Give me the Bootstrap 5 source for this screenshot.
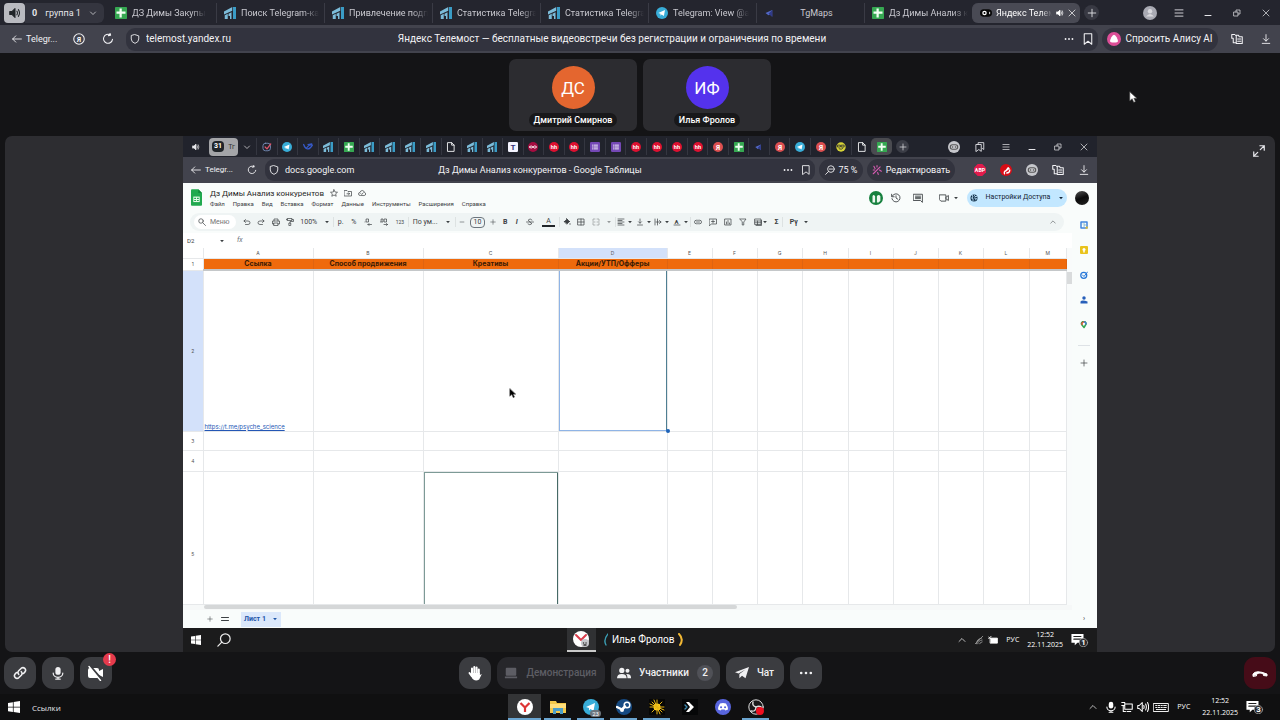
<!DOCTYPE html>
<html lang="ru">
<head>
<meta charset="utf-8">
<meta name="viewport" content="width=device-width, initial-scale=1">
<title>Яндекс Телемост</title>
<link rel="stylesheet" href="https://cdn.jsdelivr.net/npm/bootstrap@5.3.0/dist/css/bootstrap.min.css">
<style>
body{background:#141416;color:#e6e6ea;font:10px/14px Roboto,"Noto Sans",sans-serif;overflow-x:hidden}
svg{width:12px;height:12px;flex:none;display:block;fill:none;stroke:currentColor;stroke-width:1.4;stroke-linecap:round;stroke-linejoin:round}
svg.s6{width:6px;height:6px}svg.s8{width:8px;height:8px}svg.s10{width:10px;height:10px}svg.s14{width:14px;height:14px}svg.s16{width:16px;height:16px}
svg text{fill:#fff;stroke:none;font:bold 9px Roboto,sans-serif;text-anchor:middle}
.plain{border:0;background:none;padding:0;color:inherit;font:inherit;display:inline-flex;align-items:center;justify-content:center;white-space:nowrap;flex:none}
.plain:hover{color:inherit}
input.bare{border:0;background:none;padding:0;color:inherit;font:inherit;min-width:0;outline:0}
.slot{width:29px}
.gap6{gap:6px}
.clip{overflow:hidden;white-space:nowrap}
/* outer browser */
.tabs{background:#24252e;height:25px;font-size:9px}
.tab-item{flex:0 1 108px;min-width:0;padding:0 4px 0 7px;height:20px;gap:5px;color:#c9c9d0;text-decoration:none}
.tab-item+.tab-item{border-left:1px solid #3a3b45}
.tab-item.active{background:#494a54;border-color:#494a54;border-radius:6px;color:#fff;gap:4px}
.fade-end{-webkit-mask-image:linear-gradient(90deg,#000 80%,transparent);mask-image:linear-gradient(90deg,#000 80%,transparent)}
.addr{background:#42434d;height:28px;color:#f2f2f5}
.field{background:#32333e;border-radius:9px;height:23px;display:grid;grid-template-columns:1fr auto 1fr;align-items:center}
.pill{background:#32333e;border-radius:12px;height:23px}
/* meeting */
.people{height:83px;padding-top:6px}
.tile{width:128px;height:72px;background:#2c2c30;border-radius:7px;padding-top:7px}
.face{width:43px;height:43px;font-size:17px;color:#fff}
.name{background:#18181a;border-radius:7px;font-size:9px;font-weight:500;height:14px;padding:0 5px;color:#fff}
.stage{background:#2d2d31;border-radius:7px;padding:0 178px;margin:0 5px}
.ctl{height:32px;min-width:32px;border-radius:11px;background:#3b3c40;color:#f0f0f2;font-weight:500}
.ctl:disabled{background:#27272b;color:#5d5d64}
.three{display:grid;grid-template-columns:1fr auto 1fr;align-items:center}
/* shared screen */
.in-tabs{background:#21232c;height:21px}
.in-tabs .strip{width:636px}
.in-tabs .strip>*{flex:1;height:17px;border-left:1px solid #343640}
.in-tabs .strip>.active{background:#4a4b50;border-radius:5px;border-color:#4a4b50}
.in-tabs .slot,.in-addr .slot{width:26px}
.in-addr{background:#42434d;height:26px;font-size:9px;color:#f2f2f5}
.in-addr .field,.in-addr .pill{height:22px}
.docs{background:#f9fcfb;color:#3c4043;font-size:7px;line-height:9px}
.doc-head{height:29px}
.doc-title{font-size:8px;line-height:11px;color:#1f1f1f}
.doc-menu{font-size:6px}
.share{background:#c2e7ff;border-radius:10px;height:18px;color:#123}
.tools{background:#eff4f4;border-radius:9px;height:18px;margin:1px 8px 2px 7px;padding-left:4px}
.tools>div{display:flex;align-items:center;justify-content:space-around;flex:none}
.tools>.cut{border-left:1px solid #dde2e2;height:10px}
.sheet{table-layout:fixed;width:100%;border-collapse:collapse;background:#fff;color:#222;line-height:8px;font-size:7px;font-family:Inter,"Noto Sans",sans-serif}
.sheet th,.sheet td{border-right:1px solid #e6e8ea;border-bottom:1px solid #e6e8ea;padding:0 1px;overflow:hidden;white-space:nowrap}
.sheet thead th{font-size:5px;font-weight:400;text-align:center;height:10px;color:#555}
.sheet tbody th{font-size:5px;font-weight:400;text-align:center;vertical-align:middle;color:#555}
.sheet .caps td{background:#ef6a0c;border-color:#df6410;text-align:center;vertical-align:middle;font-weight:700;color:#3a1a04;height:12px;border-bottom:2px solid #c4c7c9}
.sheet .pick{background:#d3e1fa}
.sheet td.chosen{position:relative;overflow:visible;box-shadow:inset 1px 0 #8fb4e6,inset 0 -1px #8fb4e6,inset -1px 0 #4f7f92}
.chosen::after{content:"";position:absolute;right:-3px;bottom:-2px;width:4px;height:4px;border-radius:50%;background:#1d62b8}
.sheet td.peer{box-shadow:inset 1px 0 #7d9a96,inset 0 1px #7d9a96,inset -1px 0 #466a66}
.sheet tr.last th{padding-top:32px}
.sheet a{font-size:6px;color:#2457b5}
.h-bar{height:5px;background:#f6f8f8}
.h-bar span{display:block;width:60%;height:4px;margin-left:21px;background:#d5d7d8;border-radius:2px}
.gutter{width:5px;flex:none;background:#f9fbfb;padding-top:24px}
.gutter span{display:block;height:12px;background:#d9dbdc}
.side{width:25px;flex:none}
.side .plain{height:25px}
.doc-tab{background:#dbe8fb;color:#1d55a8;font-weight:700;width:40px;height:15px}
.in-task{background:#1b1b1c;height:24px;display:grid;grid-template-columns:42% auto 1fr;align-items:center;color:#eee}
.tiny{font:7px/12px "Open Sans","Noto Sans",sans-serif;text-align:center;color:#fff}
.tiny .two{line-height:10px}
.task{background:#101011;height:26px}
.task .app{width:33px;height:26px}
.task .on{background:linear-gradient(#6ba5d0,#6ba5d0) center bottom/27px 2px no-repeat}
.task .cur{background:linear-gradient(#6ba5d0,#6ba5d0) center bottom/100% 2px no-repeat #333436}
.links{font:8px "Open Sans","Noto Sans",sans-serif}
.in-app{width:29px;height:24px;background:#303133;border-bottom:2px solid #c9c9c9}
.over{position:absolute;pointer-events:none}
.alert-dot{top:-4px;right:-4px;width:13px;height:13px;background:#e53a4c;color:#fff;font-size:10px;line-height:13px;text-align:center;border-radius:50%}
.count{background:#505157;border-radius:8px;width:16px;height:16px;line-height:16px;text-align:center}
.note-svg{width:18px;height:14px}
</style>
</head>
<body class="d-flex flex-column min-vh-100 position-relative">
<svg class="d-none" aria-hidden="true">
<symbol id="spk" viewBox="0 0 16 16"><path d="M1 6h3l4-4v12l-4-4H1z" fill="currentColor"/><path d="M10.500 5.500q1.500 2.500 0 5M12.500 3.500q3 4.500 0 9"/></symbol>
<symbol id="chev" viewBox="0 0 16 16"><path d="M3 6l5 5 5-5"/></symbol>
<symbol id="up" viewBox="0 0 16 16"><path d="M2 11l6-6 6 6"/></symbol>
<symbol id="caret" viewBox="0 0 16 16"><path d="M3 5h10l-5 6z" fill="currentColor" stroke="none"/></symbol>
<symbol id="gs" viewBox="0 0 16 16" stroke="none"><rect width="16" height="16" rx="1" fill="#36a852"/><path d="M6 2h3v4h5v3H9v5H6V9H2V6h4z" fill="#f2fff4"/></symbol>
<symbol id="st" viewBox="0 0 16 16" stroke="none"><path d="M0 6L11 0v5L0 10zM1 11l4-2v7H1zM6 9l4-2v9H8v-4H6z" fill="#7cbcd9"/><path d="M12 0h4v16h-4z" fill="#3a9cc6"/></symbol>
<symbol id="tg" viewBox="0 0 16 16" stroke="none"><circle cx="8" cy="8" r="8" fill="#38add8"/><path d="M3 8l9-4-1.500 8-3-2-1.500 1.500V9z" fill="#fff"/></symbol>
<symbol id="tm" viewBox="0 0 16 16" stroke="none"><path d="M2 8l9-4v9l-3-3-2 1z" fill="#5369c7"/><path d="M6 9l5-5v9z" fill="#303b88"/></symbol>
<symbol id="eye" viewBox="0 0 16 16" stroke="none"><rect y="3" width="16" height="10" rx="5" fill="#080808"/><circle cx="6" cy="8" r="3" fill="#fff"/><circle cx="6" cy="8" r="1.300" fill="#000"/><path d="M12 6l2 2-2 2z" fill="#ddd"/></symbol>
<symbol id="x" viewBox="0 0 16 16"><path d="M2 2l12 12M14 2L2 14"/></symbol>
<symbol id="plus" viewBox="0 0 16 16"><path d="M8 2v12M2 8h12"/></symbol>
<symbol id="minus" viewBox="0 0 16 16"><path d="M3 8h10"/></symbol>
<symbol id="ham" viewBox="0 0 16 16"><path d="M1 3h14M1 8h14M1 13h14" stroke-linecap="butt"/></symbol>
<symbol id="two" viewBox="0 0 16 16"><path d="M1 5h14M1 11h14" stroke-width="2"/></symbol>
<symbol id="min" viewBox="0 0 16 16"><path d="M2 13h12" stroke-width="2"/></symbol>
<symbol id="rest" viewBox="0 0 16 16"><path d="M2 6h8v8H2zM6 6V2h8v8h-4"/></symbol>
<symbol id="back" viewBox="0 0 16 16"><path d="M15 8H1M6 3L1 8l5 5"/></symbol>
<symbol id="reload" viewBox="0 0 16 16"><path d="M14 8.500a6 6 0 1 1-3-6M10.500 0l1 3-3 .5"/></symbol>
<symbol id="shield" viewBox="0 0 16 16"><path d="M8 1l6 2v5q0 5-6 7-6-2-6-7V3z"/></symbol>
<symbol id="ya" viewBox="0 0 16 16"><circle cx="8" cy="8" r="7"/><text x="8" y="11.500">Я</text></symbol>
<symbol id="yar" viewBox="0 0 16 16"><circle cx="8" cy="8" r="8" fill="#dc4f50" stroke="none"/><text x="8" y="12" style="font-size:11px">Я</text></symbol>
<symbol id="dots" viewBox="0 0 16 16" stroke="none" fill="currentColor"><circle cx="2.500" cy="8" r="1.500"/><circle cx="8" cy="8" r="1.500"/><circle cx="13.500" cy="8" r="1.500"/></symbol>
<symbol id="mark-i" viewBox="0 0 16 16"><path d="M3 1h10v14l-5-4-5 4z"/></symbol>
<symbol id="alice" viewBox="0 0 16 16" stroke="none"><circle cx="8" cy="8" r="8" fill="#dd4f98"/><path d="M8 3q1.500 0 3 3t1.500 4.500Q12.500 12 8 12t-4.500-1.500Q3.500 9 5 6t3-3z" fill="#fff"/></symbol>
<symbol id="panel" viewBox="0 0 16 16"><path d="M5 2H1v5h2v6h3M6 3h4l1 2h4v9H7V3M9 8h4M9 11h4"/></symbol>
<symbol id="down" viewBox="0 0 16 16"><path d="M8 1v10M4 7.500l4 4 4-4M2 15h12"/></symbol>
<symbol id="user" viewBox="0 0 16 16" stroke="none"><circle cx="8" cy="8" r="8" fill="#a9aab3"/><circle cx="8" cy="6" r="2.500" fill="#d9d9dd"/><path d="M3.500 12q4.500-6 9 0z" fill="#d9d9dd"/></symbol>
<symbol id="chk" viewBox="0 0 16 16"><rect x="1.500" y="2" width="12" height="12" rx="4" stroke="#7891bd"/><path d="M5 8l3 3 6-8" stroke="#e2566d" stroke-width="2"/></symbol>
<symbol id="wv" viewBox="0 0 16 16"><path d="M1 4q3 9 6 4t8-3q-4 7-8 6T1 4zM8 4l6-1" stroke="#3659c8" stroke-width="2"/></symbol>
<symbol id="doc" viewBox="0 0 16 16"><path d="M3 1h6l4 4v10H3zM9 1v4h4"/></symbol>
<symbol id="tt" viewBox="0 0 16 16"><rect width="16" height="16" rx="2" fill="#f4f4ff" stroke="none"/><text x="8" y="12.500" style="font-size:13px;fill:#333078">T</text></symbol>
<symbol id="oo" viewBox="0 0 16 16"><circle cx="8" cy="8" r="8" fill="#a50c40" stroke="none"/><path d="M2 8q3-4 6 0t6 0q-3-4-6 0T2 8" stroke="#fff"/></symbol>
<symbol id="hh" viewBox="0 0 16 16"><circle cx="8" cy="8" r="8" fill="#dd1030" stroke="none"/><text x="8" y="11">hh</text></symbol>
<symbol id="fm" viewBox="0 0 16 16"><rect width="16" height="16" rx="2" fill="#7448b5" stroke="none"/><path d="M4 5h1M7 5h5M4 8h1M7 8h5M4 11h1M7 11h5" stroke="#fff"/></symbol>
<symbol id="sm" viewBox="0 0 16 16"><circle cx="8" cy="8" r="7.500" fill="#d8d436" stroke="none"/><path d="M3 5h4v3H3zM9 5h4v3H9zM5 11q4 2 6-1" stroke="#333"/></symbol>
<symbol id="rob" viewBox="0 0 16 16"><circle cx="8" cy="8" r="8" fill="#c6c7cc" stroke="none"/><rect x="3" y="5" width="10" height="6" rx="3" stroke="#555"/><path d="M6 8h.1M10 8h.1" stroke="#555" stroke-width="2"/></symbol>
<symbol id="bm2" viewBox="0 0 16 16"><path d="M5 4V1h9v11l-2-1.500M2 4h8v11l-4-3-4 3z"/></symbol>
<symbol id="zoom" viewBox="0 0 16 16"><circle cx="9.500" cy="6.500" r="5.300"/><path d="M5.500 10.500L1 15M7 6.500h5"/></symbol>
<symbol id="wand" viewBox="0 0 16 16" stroke="#d35bb0"><path d="M2 14L13 3M3 2l2 4M8 1v2M12 8l3 2M9 12l1 3M2 8h2" stroke-width="1.800"/></symbol>
<symbol id="abp" viewBox="0 0 16 16"><path d="M5 0h6l5 5v6l-5 5H5l-5-5V5z" fill="#e21b4c" stroke="none"/><text x="8" y="10.500" style="font-size:7px">ABP</text></symbol>
<symbol id="red" viewBox="0 0 16 16"><circle cx="8" cy="8" r="8" fill="#d80d16" stroke="none"/><path d="M6 13q-1-3 2-4l4-3M8 9l3-4M9 12q4 0 4-4" stroke="#fff" stroke-width="1.800"/></symbol>
<symbol id="glogo" viewBox="0 0 12 18" stroke="none"><path d="M1 0h7l4 4v13q0 1-1 1H1q-1 0-1-1V1q0-1 1-1z" fill="#21a94f"/><path d="M8 0l4 4H8z" fill="#128a3b"/><path d="M2.500 8h7v6h-7z" fill="#e6fbea"/><path d="M3.500 9.200h2v1.300h-2zM6.500 9.200h2v1.300h-2zM3.500 11.600h2v1.300h-2zM6.500 11.600h2v1.300h-2z" fill="#21a94f"/></symbol>
<symbol id="star" viewBox="0 0 16 16"><path d="M8 1.500l2 4.500 5 .5-3.700 3.200 1.100 4.800L8 12l-4.400 2.500 1.100-4.800L1 6.500 6 6z"/></symbol>
<symbol id="fold" viewBox="0 0 16 16"><path d="M1 3h5l2 2h7v9H1zM6 9.500h5M9 7.500l2 2-2 2"/></symbol>
<symbol id="cloud" viewBox="0 0 16 16"><path d="M4 13q-3 0-3-3t3-3q1-4 4.500-4T13 7q2.500.5 2.500 3T13 13zM5.500 9l2 2 3-3.500"/></symbol>
<symbol id="hist" viewBox="0 0 16 16"><path d="M2 5a6.500 6.500 0 1 1-.5 4M1 2v4h4M8 4.500V8l3 2"/></symbol>
<symbol id="cmt" viewBox="0 0 16 16"><path d="M1 2h14v13l-3-3H1zM4 5h8M4 7h8M4 9h8"/></symbol>
<symbol id="vid" viewBox="0 0 16 16"><path d="M1 3h10v10H3l-2-2zM11 7l4-3v8l-4-3"/></symbol>
<symbol id="globe" viewBox="0 0 16 16"><circle cx="8" cy="8" r="7" fill="#12314a" stroke="none"/><path d="M5 3l1 3-3 2 3 1v4M9 3l1 2h3M9 8l4 1-2 3" stroke="#c2e7ff" stroke-width="1.800"/></symbol>
<symbol id="mag" viewBox="0 0 16 16"><circle cx="6" cy="6" r="4.500"/><path d="M9.500 9.500L15 15"/></symbol>
<symbol id="magl" viewBox="0 0 16 16"><circle cx="9.500" cy="6.500" r="5.500"/><path d="M5.500 10.500L1 15"/></symbol>
<symbol id="undo" viewBox="0 0 16 16"><path d="M5 3L2 6l3 3M2 6h8q4 0 4 3.500T10 13H5"/></symbol>
<symbol id="redo" viewBox="0 0 16 16"><path d="M11 3l3 3-3 3M14 6H6Q2 6 2 9.500T6 13h5"/></symbol>
<symbol id="print" viewBox="0 0 16 16"><path d="M4 6V2h8v4M4 12H1V6h14v6h-3M4 10h8v5H4z"/></symbol>
<symbol id="paint" viewBox="0 0 16 16"><path d="M3 1h9v4H3zM12 3h3v4H8v3M6.500 10h3v5h-3zM3 3H1"/></symbol>
<symbol id="dec" viewBox="0 0 16 16"><path d="M2 8h.1M5 2h4v6H5zM8 13h7M10 11l-2 2 2 2"/></symbol>
<symbol id="inc" viewBox="0 0 16 16"><path d="M3 2h3v6H3zM9 2h4v6H9zM1 8h.1M8 13h7M13 11l2 2-2 2"/></symbol>
<symbol id="strk" viewBox="0 0 16 16"><path d="M1 8h14M12 4Q8 0 5 3.500 4 6 8 8t3 4Q8 15 4 12"/></symbol>
<symbol id="fill" viewBox="0 0 16 16"><path d="M3 7l5-5 5 5-5 5zM6 0l3 3M3 7h10z" fill="currentColor"/><path d="M14 11v2"/></symbol>
<symbol id="bord" viewBox="0 0 16 16"><path d="M2 2h12v12H2zM8 2v12M2 8h12"/></symbol>
<symbol id="merge" viewBox="0 0 16 16"><path d="M2 6V2h4M10 2h4v4M2 10v4h4M10 14h4v-4M2 8h4M10 8h4"/></symbol>
<symbol id="al" viewBox="0 0 16 16"><path d="M2 2h12M2 5h8M2 8h12M2 11h8M2 14h12"/></symbol>
<symbol id="va" viewBox="0 0 16 16"><path d="M8 2v8M5 7.500l3 3 3-3M3 14h10"/></symbol>
<symbol id="wr" viewBox="0 0 16 16"><path d="M2 2v12M7 2v12M4 8h10M11 5l3 3-3 3"/></symbol>
<symbol id="rotA" viewBox="0 0 16 16"><text x="7" y="11" style="fill:currentColor;font-size:12px">A</text><path d="M2 14h12"/></symbol>
<symbol id="lnk" viewBox="0 0 16 16"><path d="M7 4.500H4.500a3.500 3.500 0 0 0 0 7H7M9 4.500h2.500a3.500 3.500 0 0 1 0 7H9M5 8h6"/></symbol>
<symbol id="addc" viewBox="0 0 16 16"><path d="M1 2h14v10H5l-4 3zM8 4v6M5 7h6"/></symbol>
<symbol id="chart" viewBox="0 0 16 16"><path d="M2 2h12v12H2zM5 12V8M8 12V5M11 12v-2"/></symbol>
<symbol id="filt" viewBox="0 0 16 16"><path d="M2 2h12L9.500 8v6h-3V8z"/></symbol>
<symbol id="tbl" viewBox="0 0 16 16"><path d="M2 2h12v11H2zM2 6h12M7 6v7M2 9.500h12M4 15h11V5" /></symbol>
<symbol id="cal" viewBox="0 0 16 16"><path d="M2 2h12v12H2z" fill="#fff" stroke="#4285dd" stroke-width="3"/><path d="M6 6h4v4H7" stroke="#61a4b4"/><path d="M14 12v2h-2" stroke="#e4bd2d" stroke-width="3"/></symbol>
<symbol id="keep" viewBox="0 0 16 16" stroke="none"><rect width="16" height="16" rx="2" fill="#e9c31c"/><circle cx="8" cy="7" r="3" fill="#fff"/><path d="M6.500 10h3v3h-3z" fill="#fff"/></symbol>
<symbol id="todo" viewBox="0 0 16 16"><circle cx="7.500" cy="8.500" r="6" stroke="#2878d8" stroke-width="2.500"/><path d="M5 8l3 3 7-9" stroke="#2878d8" stroke-width="2"/></symbol>
<symbol id="pers" viewBox="0 0 16 16" stroke="none" fill="#275fba"><circle cx="8" cy="4" r="3.500"/><path d="M1 15V11q3-4 14 0v4z"/></symbol>
<symbol id="map" viewBox="0 0 16 16"><path d="M4 8a4.500 4.500 0 1 1 7 0L8 13z" stroke="#34a853" stroke-width="3"/><path d="M4 7V4l3-2" stroke="#e25137" stroke-width="3"/><path d="M9 2q3 1 3 4" stroke="#477dd5" stroke-width="3"/></symbol>
<symbol id="win" viewBox="0 0 16 16" stroke="none"><path d="M0 2.500L6.500 1.500V7.500H0zM7.500 1.300L16 0v7.500H7.500zM0 8.500h6.500v6L0 13.500zM7.500 8.500H16V16l-8.500-1.300z" fill="#fff"/></symbol>
<symbol id="yb" viewBox="0 0 16 16"><circle cx="8" cy="8" r="8" fill="#fff" stroke="none"/><path d="M3.500 4L8 8.500 12.500 4M8 8.500V13" stroke="#dd3535" stroke-width="2.200" stroke-linecap="butt"/></symbol>
<symbol id="yi" viewBox="0 0 16 16"><circle cx="8" cy="8" r="8" fill="#fff" stroke="none"/><path d="M3 4l5 5 5-5" stroke="#d93d4c" stroke-width="2"/><circle cx="12" cy="12" r="4" fill="#c5c6cb" stroke="none"/><path d="M10.500 12h.1M13 12h.1M11 14h2" stroke="#333"/></symbol>
<symbol id="ex" viewBox="0 0 16 16" stroke="none"><path d="M0 2h6l1 2h9v10H0z" fill="#f2c84b"/><path d="M0 5h16v4H0z" fill="#ffdf7c"/><path d="M3 9h10v6h-3v-3H6v3H3z" fill="#4c9fc9"/></symbol>
<symbol id="steam" viewBox="0 0 16 16"><circle cx="8" cy="8" r="8" fill="#164a82" stroke="none"/><circle cx="11" cy="6" r="2.800" stroke="#fff" stroke-width="1.500"/><path d="M1 8l5 2.500L9 7.500" stroke="#fff" stroke-width="2.500"/><circle cx="6" cy="11" r="2" fill="#fff" stroke="none"/></symbol>
<symbol id="sun" viewBox="0 0 16 16"><rect width="16" height="16" fill="#060606" stroke="none"/><circle cx="8" cy="8" r="3.500" fill="#ffd21c" stroke="none"/><path d="M8 1v14M1 8h14M3 3l10 10M13 3L3 13M5 1l6 14M1 5l14 6" stroke="#e9b716" stroke-width="1"/></symbol>
<symbol id="arr" viewBox="0 0 16 16"><rect width="16" height="16" fill="#060708" stroke="none"/><path d="M4 3h3l5 5-5 5H4l4-5z" fill="#fff" stroke="none"/><path d="M3 6l2 2-2 2" stroke="#3e8ab0"/></symbol>
<symbol id="disc" viewBox="0 0 16 16"><circle cx="8" cy="8" r="8" fill="#5865dd" stroke="none"/><path d="M5 4.500q3-1 6 0 2 3 2 6l-2.500 1-1-1h-3l-1 1-2.500-1q0-3 2-6z" fill="#fff" stroke="none"/><path d="M6 8.300h.1M10 8.300h.1" stroke="#5865dd" stroke-width="2"/></symbol>
<symbol id="obs" viewBox="0 0 16 16"><circle cx="8" cy="8" r="7.200" fill="#19191a" stroke="#ddd" stroke-width="1"/><path d="M8 8q-4-1-3-5M8 8q4-2 6 1M8 8q0 5-5 4" stroke="#ddd"/><circle cx="12" cy="12" r="4" fill="#ef1021" stroke="none"/></symbol>
<symbol id="mic" viewBox="0 0 16 16"><rect x="5" y="1" width="6" height="9" rx="3" fill="currentColor" stroke="none"/><path d="M2.500 8a5.500 5 0 0 0 11 0M8 13v2M5.500 15h5"/></symbol>
<symbol id="chain" viewBox="0 0 16 16" stroke-width="1.800"><path d="M6.500 9.500a3 3 0 0 1 0-4l3-3a3 3 0 0 1 4.200 4.200L12 8.500M9.500 6.500a3 3 0 0 1 0 4l-3 3a3 3 0 0 1-4.200-4.200L4 7.500"/></symbol>
<symbol id="cam" viewBox="0 0 16 16"><path d="M0 5q0-2 2-2h7q2 0 2 2v1l4-2v8l-4-2v1q0 2-2 2H2q-2 0-2-2z" fill="#fff" stroke="none"/><path d="M2 1l12 14" stroke="#3b3c40" stroke-width="2.500"/><path d="M1 1.500l11.500 14" stroke="#fff"/></symbol>
<symbol id="hand" viewBox="0 0 16 16"><path d="M5 9V3.500M7.300 8V2M9.600 8V2.500M11.800 9V4.500M2.500 8L5 11.500" stroke="#fff" stroke-width="2"/><path d="M4 8h8.800v2l2-1-2.600 5.500q-4 2.500-7-1z" fill="#fff" stroke="none"/></symbol>
<symbol id="duo" viewBox="0 0 16 16"><circle cx="8" cy="8" r="8" fill="#16803e" stroke="none"/><path d="M4 13V6q1-3 3 0v7zM9 13V6q2-3 4 0v5l-2 2z" fill="#eef7f0" stroke="none"/></symbol>
<symbol id="lap" viewBox="0 0 16 16" stroke="none" fill="currentColor"><rect x="2" y="2" width="12" height="9" rx="1"/><path d="M1 12h14v2H1z"/></symbol>
<symbol id="ppl" viewBox="0 0 16 16" stroke="none" fill="currentColor"><circle cx="5.500" cy="5" r="3"/><circle cx="12" cy="5.500" r="2.300"/><path d="M0 14q0-5 5.500-5t5.500 5zM12 14q0-3-1.500-4.800Q16 9 16 13v1z"/></symbol>
<symbol id="send" viewBox="0 0 16 16" stroke="none" fill="currentColor"><path d="M0 7L16 1l-4 13-4-3-3 3V9l7-5-8 4.500z"/></symbol>
<symbol id="hang" viewBox="0 0 16 16"><path d="M1 11V9q3-4.500 14-.0V11l-3.500-.5-.5-2q-3-1-6 0l-.5 2z" fill="#fff" stroke="#fff" stroke-width="1"/></symbol>
<symbol id="net" viewBox="0 0 16 16"><path d="M5 4h10v7H5zM8 14h5M1 2h4v4H1M3 6v8h3"/></symbol>
<symbol id="vol" viewBox="0 0 16 16"><path d="M1 6h2l4-4v12l-4-4H1zM9 6q1 2 0 4M11.500 4q2 4 0 8M14 2q3 6 0 12"/></symbol>
<symbol id="kb" viewBox="0 0 24 16"><path d="M1 2h22v12H1zM4 5h2M8 5h2M12 5h2M16 5h4M4 8h2M8 8h2M12 8h2M16 8h4M5 11h14"/></symbol>
<symbol id="note" viewBox="0 0 20 16"><path d="M0 1h14v10H7l-3 3v-3H0z" fill="#fff" stroke="none"/><path d="M3 4h8M3 7h8" stroke="#222"/><circle cx="14" cy="11" r="4.700" fill="#29292b" stroke="#999" stroke-width="1"/></symbol>
<symbol id="wifi" viewBox="0 0 16 16" stroke="#999"><path d="M2 14L14 2M6 14q0-5 7-6M9 14q0-2 4-3M4 14q0-8 8-9"/></symbol>
<symbol id="bat" viewBox="0 0 16 16"><path d="M4 5h11v8H4z" fill="#fff"/><path d="M1 3l3 3M1 6l4-4"/></symbol>
<symbol id="expand" viewBox="0 0 16 16"><path d="M9 2h5v5M14 2L9.500 6.500M7 14H2V9M2 14l4.500-4.500"/></symbol>
<symbol id="ptr" viewBox="0 0 10 16"><path d="M1 1v11l3-2.500L6 14l2-1-2-4h3.500z" fill="var(--f)" stroke="#555" stroke-width=".7"/></symbol>
</svg>

<header>
 <nav class="tabs d-flex align-items-center ps-1" aria-label="Вкладки">
  <button class="plain rounded-1 text-dark" style="background:#b9bac0;width:21px;height:20px" aria-label="Звук"><svg><use href="#spk"/></svg></button>
  <button class="plain rounded-end gap-2" style="background:#34353f;width:79px;height:20px"><b>0</b><span>группа 1</span><svg class="s8"><use href="#chev"/></svg></button>
  <div class="d-flex flex-grow-1 ps-1" style="max-width:976px">
   <a href="#" class="tab-item d-flex align-items-center"><svg><use href="#gs"/></svg><span class="clip fade-end">ДЗ Димы Закупы</span></a>
   <a href="#" class="tab-item d-flex align-items-center"><svg><use href="#st"/></svg><span class="clip fade-end">Поиск Telegram-ка</span></a>
   <a href="#" class="tab-item d-flex align-items-center"><svg><use href="#st"/></svg><span class="clip fade-end">Привлечение подп</span></a>
   <a href="#" class="tab-item d-flex align-items-center"><svg><use href="#st"/></svg><span class="clip fade-end">Статистика Telegra</span></a>
   <a href="#" class="tab-item d-flex align-items-center"><svg><use href="#st"/></svg><span class="clip fade-end">Статистика Telegra</span></a>
   <a href="#" class="tab-item d-flex align-items-center"><svg><use href="#tg"/></svg><span class="clip fade-end">Telegram: View @a</span></a>
   <a href="#" class="tab-item d-flex align-items-center"><svg><use href="#tm"/></svg><span class="flex-fill text-center pe-2">TgMaps</span></a>
   <a href="#" class="tab-item d-flex align-items-center"><svg><use href="#gs"/></svg><span class="clip fade-end">Дз Димы Анализ к</span></a>
   <a href="#" class="tab-item active d-flex align-items-center"><svg><use href="#eye"/></svg><span class="clip fade-end">Яндекс Телем</span><svg class="s8"><use href="#spk"/></svg><svg class="s8"><use href="#x"/></svg></a>
  </div>
  <button class="plain rounded-circle ms-1" style="background:#383943;width:15px;height:15px" aria-label="Новая вкладка"><svg class="s10"><use href="#plus"/></svg></button>
  <div class="d-flex ms-auto">
   <button class="plain slot" aria-label="Профиль"><svg class="s14"><use href="#user"/></svg></button>
   <button class="plain slot" aria-label="Меню"><svg class="s10"><use href="#ham"/></svg></button>
   <button class="plain slot" aria-label="Свернуть"><svg class="s8"><use href="#min"/></svg></button>
   <button class="plain slot" aria-label="Окно"><svg class="s8"><use href="#rest"/></svg></button>
   <button class="plain slot" aria-label="Закрыть"><svg class="s8"><use href="#x"/></svg></button>
  </div>
 </nav>
 <div class="addr d-flex align-items-center ps-2">
  <button class="plain gap-1 justify-content-start ms-1" style="width:52px;font-size:9px"><svg class="s10"><use href="#back"/></svg>Telegr...</button>
  <button class="plain slot" aria-label="Яндекс"><svg><use href="#ya"/></svg></button>
  <button class="plain slot" aria-label="Обновить"><svg><use href="#reload"/></svg></button>
  <div class="field flex-grow-1 px-1 mx-1">
   <label class="d-flex align-items-center gap6"><svg class="s10"><use href="#shield"/></svg><input class="bare" aria-label="Адрес" value="telemost.yandex.ru"></label>
   <span class="text-nowrap">Яндекс Телемост — бесплатные видеовстречи без регистрации и ограничения по времени</span>
   <div class="d-flex align-items-center justify-content-end gap-2"><svg class="s10"><use href="#dots"/></svg><svg><use href="#mark-i"/></svg></div>
  </div>
  <button class="plain pill gap-1" style="width:116px"><svg class="s14"><use href="#alice"/></svg>Спросить Алису AI</button>
  <button class="plain slot ms-1" aria-label="Панель"><svg><use href="#panel"/></svg></button>
  <button class="plain slot" aria-label="Загрузки"><svg class="s10"><use href="#down"/></svg></button>
 </div>
</header>

<main class="d-flex flex-column flex-grow-1">
 <section class="people d-flex justify-content-center gap6" aria-label="Участники">
  <div class="tile d-flex flex-column align-items-center"><div class="face rounded-circle d-flex align-items-center justify-content-center" style="background:#e4662f">ДС</div><div class="name mt-1">Дмитрий Смирнов</div></div>
  <div class="tile d-flex flex-column align-items-center"><div class="face rounded-circle d-flex align-items-center justify-content-center" style="background:#5432ed">ИФ</div><div class="name mt-1">Илья Фролов</div></div>
 </section>

 <section class="stage position-relative flex-grow-1 d-flex flex-column">
  <button class="plain position-absolute" style="top:8px;right:9px" aria-label="Развернуть"><svg class="s14"><use href="#expand"/></svg></button>
  <div class="in-tabs d-flex align-items-center">
   <span class="slot d-flex justify-content-center"><svg class="s8"><use href="#spk"/></svg></span>
   <button class="plain rounded-1 gap-1" style="background:#a4a5a8;color:#333;width:29px;height:18px;font-size:7px"><b class="text-white bg-dark rounded-1" style="padding:0 2px;font-size:7px;line-height:11px">31</b>Тг</button>
   <span class="d-flex justify-content-center" style="width:18px"><svg class="s8"><use href="#chev"/></svg></span>
   <div class="strip d-flex text-light">
    <button class="plain"><svg class="s10"><use href="#chk"/></svg></button><button class="plain"><svg class="s10"><use href="#tg"/></svg></button><button class="plain"><svg class="s10"><use href="#wv"/></svg></button><button class="plain"><svg class="s10"><use href="#st"/></svg></button><button class="plain"><svg class="s10"><use href="#gs"/></svg></button><button class="plain"><svg class="s10"><use href="#st"/></svg></button><button class="plain"><svg class="s10"><use href="#st"/></svg></button><button class="plain"><svg class="s10"><use href="#st"/></svg></button><button class="plain"><svg class="s10"><use href="#st"/></svg></button><button class="plain"><svg class="s10"><use href="#doc"/></svg></button><button class="plain"><svg class="s10"><use href="#st"/></svg></button><button class="plain"><svg class="s10"><use href="#st"/></svg></button><button class="plain"><svg class="s10"><use href="#tt"/></svg></button><button class="plain"><svg class="s10"><use href="#oo"/></svg></button><button class="plain"><svg class="s10"><use href="#hh"/></svg></button><button class="plain"><svg class="s10"><use href="#hh"/></svg></button><button class="plain"><svg class="s10"><use href="#fm"/></svg></button><button class="plain"><svg class="s10"><use href="#fm"/></svg></button><button class="plain"><svg class="s10"><use href="#hh"/></svg></button><button class="plain"><svg class="s10"><use href="#hh"/></svg></button><button class="plain"><svg class="s10"><use href="#hh"/></svg></button><button class="plain"><svg class="s10"><use href="#hh"/></svg></button><button class="plain"><svg class="s10"><use href="#yar"/></svg></button><button class="plain"><svg class="s10"><use href="#gs"/></svg></button><button class="plain"><svg class="s10"><use href="#tm"/></svg></button><button class="plain"><svg class="s10"><use href="#yar"/></svg></button><button class="plain"><svg class="s10"><use href="#tg"/></svg></button><button class="plain"><svg class="s10"><use href="#yar"/></svg></button><button class="plain"><svg class="s10"><use href="#sm"/></svg></button><button class="plain"><svg class="s10"><use href="#doc"/></svg></button><button class="plain active"><svg class="s10"><use href="#gs"/></svg></button>
   </div>
   <button class="plain rounded-circle ms-1" style="background:#3b3d46;width:13px;height:13px" aria-label="Новая вкладка"><svg class="s8"><use href="#plus"/></svg></button>
   <div class="d-flex align-items-center ms-auto">
    <button class="plain slot"><svg><use href="#rob"/></svg></button><button class="plain slot"><svg class="s10"><use href="#bm2"/></svg></button><button class="plain slot"><svg class="s8"><use href="#ham"/></svg></button><button class="plain slot"><svg class="s8"><use href="#min"/></svg></button><button class="plain slot"><svg class="s8"><use href="#rest"/></svg></button><button class="plain slot"><svg class="s8"><use href="#x"/></svg></button>
   </div>
  </div>
  <div class="in-addr d-flex align-items-center ps-2">
   <button class="plain gap-1 justify-content-start" style="width:48px;font-size:8px"><svg class="s10"><use href="#back"/></svg>Telegr...</button>
   <button class="plain slot" aria-label="Обновить"><svg class="s10"><use href="#reload"/></svg></button>
   <div class="field flex-grow-1 me-1 px-1">
    <label class="d-flex align-items-center gap6"><svg class="s10"><use href="#shield"/></svg><input class="bare" aria-label="Адрес" value="docs.google.com"></label>
    <span class="text-nowrap">Дз Димы Анализ конкурентов - Google Таблицы</span>
    <div class="d-flex justify-content-end gap-2"><svg class="s10"><use href="#dots"/></svg><svg class="s10"><use href="#mark-i"/></svg></div>
   </div>
   <button class="plain pill gap-1 me-1" style="width:44px"><svg class="s10"><use href="#zoom"/></svg>75 %</button>
   <button class="plain pill gap-1" style="width:88px"><svg class="s10"><use href="#wand"/></svg>Редактировать</button>
   <div class="d-flex align-items-center ms-2 ps-1"><button class="plain slot"><svg><use href="#abp"/></svg></button><button class="plain slot"><svg><use href="#red"/></svg></button><button class="plain slot"><svg><use href="#rob"/></svg></button><button class="plain slot"><svg><use href="#panel"/></svg></button><button class="plain slot"><svg class="s10"><use href="#down"/></svg></button></div>
  </div>

  <div class="docs d-flex flex-column flex-grow-1">
   <div class="doc-head d-flex align-items-center ps-2">
    <svg class="me-2" style="width:11px;height:17px"><use href="#glogo"/></svg>
    <div>
     <div class="d-flex align-items-center gap6"><span class="doc-title">Дз Димы Анализ конкурентов</span><svg class="s8"><use href="#star"/></svg><svg class="s8"><use href="#fold"/></svg><svg class="s8"><use href="#cloud"/></svg></div>
     <div class="doc-menu d-flex gap-2"><button class="plain">Файл</button><button class="plain">Правка</button><button class="plain">Вид</button><button class="plain">Вставка</button><button class="plain">Формат</button><button class="plain">Данные</button><button class="plain">Инструменты</button><button class="plain">Расширения</button><button class="plain">Справка</button></div>
    </div>
    <div class="d-flex align-items-center ms-auto pe-2 gap-2">
     <svg class="s14"><use href="#duo"/></svg>
     <svg class="s10"><use href="#hist"/></svg><svg class="s10 ms-1"><use href="#cmt"/></svg>
     <span class="d-flex align-items-center gap-1 ms-2"><svg class="s10"><use href="#vid"/></svg><svg class="s6"><use href="#caret"/></svg></span>
     <button class="plain share gap-2" style="width:100px"><svg class="s8"><use href="#globe"/></svg>Настройки Доступа<svg class="s6"><use href="#caret"/></svg></button>
     <span class="rounded-circle" style="width:14px;height:14px;background:linear-gradient(160deg,#555,#0a0a0a 50%,#222)"></span>
    </div>
   </div>
   <div class="d-flex flex-grow-1">
    <div class="flex-grow-1 d-flex flex-column" style="min-width:0">
     <div class="tools d-flex align-items-center">
      <div class="rounded-pill bg-white me-1 justify-content-start ps-1" style="width:42px;height:14px"><svg class="s8"><use href="#mag"/></svg><input class="bare ps-1" style="width:28px" aria-label="Поиск в меню" placeholder="Меню"></div>
      <div style="width:57px"><svg class="s8"><use href="#undo"/></svg><svg class="s8"><use href="#redo"/></svg><svg class="s8"><use href="#print"/></svg><svg class="s8"><use href="#paint"/></svg></div>
      <div style="width:36px">100%<svg class="s6"><use href="#caret"/></svg></div>
      <div class="cut" style="width:75px"><span>р.</span><span>%</span><svg class="s8"><use href="#dec"/></svg><svg class="s8"><use href="#inc"/></svg><span style="font-size:5px">123</span></div>
      <div class="cut" style="width:47px">По ум...<svg class="s6"><use href="#caret"/></svg></div>
      <div class="cut" style="width:44px"><svg class="s6"><use href="#minus"/></svg><input class="bare border border-secondary rounded-1 text-center" style="width:15px;height:11px" aria-label="Размер" value="10"><svg class="s6"><use href="#plus"/></svg></div>
      <div style="width:60px"><b>B</b><i class="fw-bold">I</i><svg class="s8"><use href="#strk"/></svg><span class="border-bottom border-dark border-2 px-1" style="line-height:8px">A</span></div>
      <div class="cut" style="width:56px"><svg class="s8"><use href="#fill"/></svg><svg class="s8"><use href="#bord"/></svg><svg class="s8 opacity-50"><use href="#merge"/></svg><svg class="s6 opacity-50"><use href="#caret"/></svg></div>
      <div class="cut" style="width:75px"><svg class="s8"><use href="#al"/></svg><svg class="s6"><use href="#caret"/></svg><svg class="s8"><use href="#va"/></svg><svg class="s6"><use href="#caret"/></svg><svg class="s8"><use href="#wr"/></svg><svg class="s6"><use href="#caret"/></svg><svg class="s8"><use href="#rotA"/></svg><svg class="s6"><use href="#caret"/></svg></div>
      <div class="cut" style="width:92px"><svg class="s8"><use href="#lnk"/></svg><svg class="s8"><use href="#addc"/></svg><svg class="s8"><use href="#chart"/></svg><svg class="s8"><use href="#filt"/></svg><span class="d-flex align-items-center"><svg class="s8"><use href="#tbl"/></svg><svg class="s6"><use href="#caret"/></svg></span><b>Σ</b></div>
      <div class="cut ps-1" style="width:30px"><b>Pγ</b><svg class="s6"><use href="#caret"/></svg></div>
      <svg class="s6 ms-auto me-2"><use href="#up"/></svg>
     </div>
     <div class="d-flex align-items-center bg-white" style="height:15px"><input class="bare ps-1" style="width:28px;font-size:6px" aria-label="Ячейка" value="D2"><svg class="s6 ms-2"><use href="#caret"/></svg><i class="ms-2 ps-1 text-secondary">fx</i><input class="bare flex-grow-1" aria-label="Формула"></div>
     <div class="d-flex flex-grow-1">
      <table class="sheet">
       <colgroup><col style="width:20px"><col style="width:110px"><col style="width:110px"><col style="width:135px"><col style="width:109px"><col style="width:45px"><col style="width:45px"><col style="width:45px"><col style="width:46px"><col style="width:45px"><col style="width:45px"><col style="width:45px"><col style="width:46px"><col></colgroup>
       <thead><tr><th></th><th>A</th><th>B</th><th>C</th><th class="pick">D</th><th>E</th><th>F</th><th>G</th><th>H</th><th>I</th><th>J</th><th>K</th><th>L</th><th>M</th></tr></thead>
       <tbody>
        <tr class="caps"><th>1</th><td>Ссылка</td><td>Способ продвижения</td><td>Креативы</td><td>Акции/УТП/Офферы</td><td></td><td></td><td></td><td></td><td></td><td></td><td></td><td></td><td></td></tr>
        <tr style="height:161px"><th class="pick">2</th><td class="align-bottom"><a href="#">https://t.me/psyche_science</a></td><td></td><td></td><td class="chosen"></td><td></td><td></td><td></td><td></td><td></td><td></td><td></td><td></td><td></td></tr>
        <tr style="height:19px"><th>3</th><td></td><td></td><td></td><td></td><td></td><td></td><td></td><td></td><td></td><td></td><td></td><td></td><td></td></tr>
        <tr style="height:21px"><th>4</th><td></td><td></td><td></td><td></td><td></td><td></td><td></td><td></td><td></td><td></td><td></td><td></td><td></td></tr>
        <tr class="last" style="height:133px"><th>5</th><td></td><td></td><td class="peer"></td><td></td><td></td><td></td><td></td><td></td><td></td><td></td><td></td><td></td><td></td></tr>
       </tbody>
      </table>
      <div class="gutter"><span></span></div>
     </div>
     <div class="h-bar"><span></span></div>
    </div>
    <div class="side d-flex flex-column align-items-center">
     <button class="plain" aria-label="Календарь"><svg class="s8"><use href="#cal"/></svg></button><button class="plain" aria-label="Заметки"><svg class="s8"><use href="#keep"/></svg></button><button class="plain" aria-label="Задачи"><svg class="s8"><use href="#todo"/></svg></button><button class="plain" aria-label="Контакты"><svg class="s8"><use href="#pers"/></svg></button><button class="plain" aria-label="Карты"><svg class="s8"><use href="#map"/></svg></button>
     <div class="border-top mt-2" style="width:12px"></div><button class="plain mt-1" aria-label="Дополнения"><svg class="s8"><use href="#plus"/></svg></button>
    </div>
   </div>
   <div class="d-flex align-items-center" style="height:18px;padding-left:24px"><svg class="s6"><use href="#plus"/></svg><svg class="s8 ms-2 me-2 px-0"><use href="#two"/></svg><button class="plain doc-tab gap6 ms-1">Лист 1<svg class="s6"><use href="#caret"/></svg></button><span class="ms-auto me-2 pe-1">›</span></div>
  </div>

  <div class="in-task">
   <div class="d-flex align-items-center ps-2 gap-3"><svg class="s10"><use href="#win"/></svg><svg class="s14"><use href="#magl"/></svg></div>
   <div class="d-flex align-items-center gap-2"><button class="plain in-app" aria-label="Браузер"><svg class="s16"><use href="#yi"/></svg></button><span class="d-flex align-items-center gap-1"><svg style="width:4px;height:14px" viewBox="0 0 4 14"><path d="M4 1Q-1 7 2 12" stroke="#3b9eb4"/></svg><span class="text-white">Илья Фролов</span><svg style="width:5px;height:14px" viewBox="0 0 5 14"><path d="M1 1q5 5 1 11" stroke="#f2b834" stroke-width="2"/></svg></span></div>
   <div class="d-flex align-items-center justify-content-end tiny gap-1 pe-2"><svg class="s8 me-1"><use href="#up"/></svg><svg class="s10"><use href="#wifi"/></svg><svg class="s10"><use href="#bat"/></svg><span class="ps-1">РУС</span><span class="two ms-1">12:52<br>22.11.2025</span><svg class="note-svg ms-1" viewBox="0 0 20 16"><use href="#note"/><text x="14" y="14">1</text></svg></div>
  </div>
  <svg class="over" style="--f:#000;left:504px;top:252px;width:7px;height:11px"><use href="#ptr"/></svg>
 </section>

 <section class="three w-100 px-1" style="height:42px" aria-label="Управление">
  <div class="d-flex gap6">
   <button class="plain ctl" aria-label="Ссылка"><svg class="s14"><use href="#chain"/></svg></button><button class="plain ctl" aria-label="Микрофон"><svg class="s14"><use href="#mic"/></svg></button><button class="plain ctl position-relative" aria-label="Камера"><svg class="s16"><use href="#cam"/></svg><span class="over alert-dot">!</span></button>
  </div>
  <div class="d-flex gap6">
   <button class="plain ctl" aria-label="Рука"><svg class="s16"><use href="#hand"/></svg></button>
   <button class="plain ctl gap-2" style="width:108px" disabled><svg class="s14"><use href="#lap"/></svg>Демонстрация</button>
   <button class="plain ctl gap-2" style="width:109px"><svg class="s14"><use href="#ppl"/></svg>Участники<span class="count">2</span></button>
   <button class="plain ctl gap-2" style="width:58px"><svg class="s14"><use href="#send"/></svg>Чат</button>
   <button class="plain ctl" aria-label="Ещё"><svg class="s14"><use href="#dots"/></svg></button>
  </div>
  <div class="d-flex justify-content-end"><button class="plain ctl" style="background:#460c18" aria-label="Завершить"><svg class="s16"><use href="#hang"/></svg></button></div>
 </section>
</main>

<footer class="task three">
 <div class="d-flex align-items-center gap-2 ps-2"><svg class="me-1"><use href="#win"/></svg><span class="links">Ссылки</span></div>
 <div class="d-flex">
  <button class="plain app cur" aria-label="Браузер"><svg class="s16"><use href="#yb"/></svg></button><button class="plain app on" aria-label="Проводник"><svg class="s16"><use href="#ex"/></svg></button><button class="plain app on position-relative" aria-label="Telegram"><svg class="s16"><use href="#tg"/></svg><span class="over bg-secondary rounded-1 text-white" style="right:6px;bottom:3px;padding:0 2px;font-size:6px;line-height:7px">23</span></button><button class="plain app on" aria-label="Steam"><svg class="s16"><use href="#steam"/></svg></button><button class="plain app on" aria-label="Приложение"><svg class="s16"><use href="#sun"/></svg></button><button class="plain app" aria-label="Терминал"><svg class="s16"><use href="#arr"/></svg></button><button class="plain app" aria-label="Discord"><svg class="s16"><use href="#disc"/></svg></button><button class="plain app on" aria-label="OBS"><svg class="s16"><use href="#obs"/></svg></button>
 </div>
 <div class="d-flex align-items-center justify-content-end tiny gap-1 pe-3"><svg class="s8 me-1"><use href="#up"/></svg><svg><use href="#mic"/></svg><svg><use href="#net"/></svg><svg><use href="#vol"/></svg><svg style="width:16px;height:11px"><use href="#kb"/></svg><span class="px-1">РУС</span><span class="mx-1">12:52<br>22.11.2025</span><svg class="note-svg" viewBox="0 0 20 16"><use href="#note"/><text x="14" y="14">3</text></svg></div>
</footer>
<svg class="over" style="--f:#fff;left:1129px;top:91px;width:8px;height:13px"><use href="#ptr"/></svg>
<script src="https://cdn.jsdelivr.net/npm/bootstrap@5.3.0/dist/js/bootstrap.bundle.min.js"></script>
</body>
</html>
